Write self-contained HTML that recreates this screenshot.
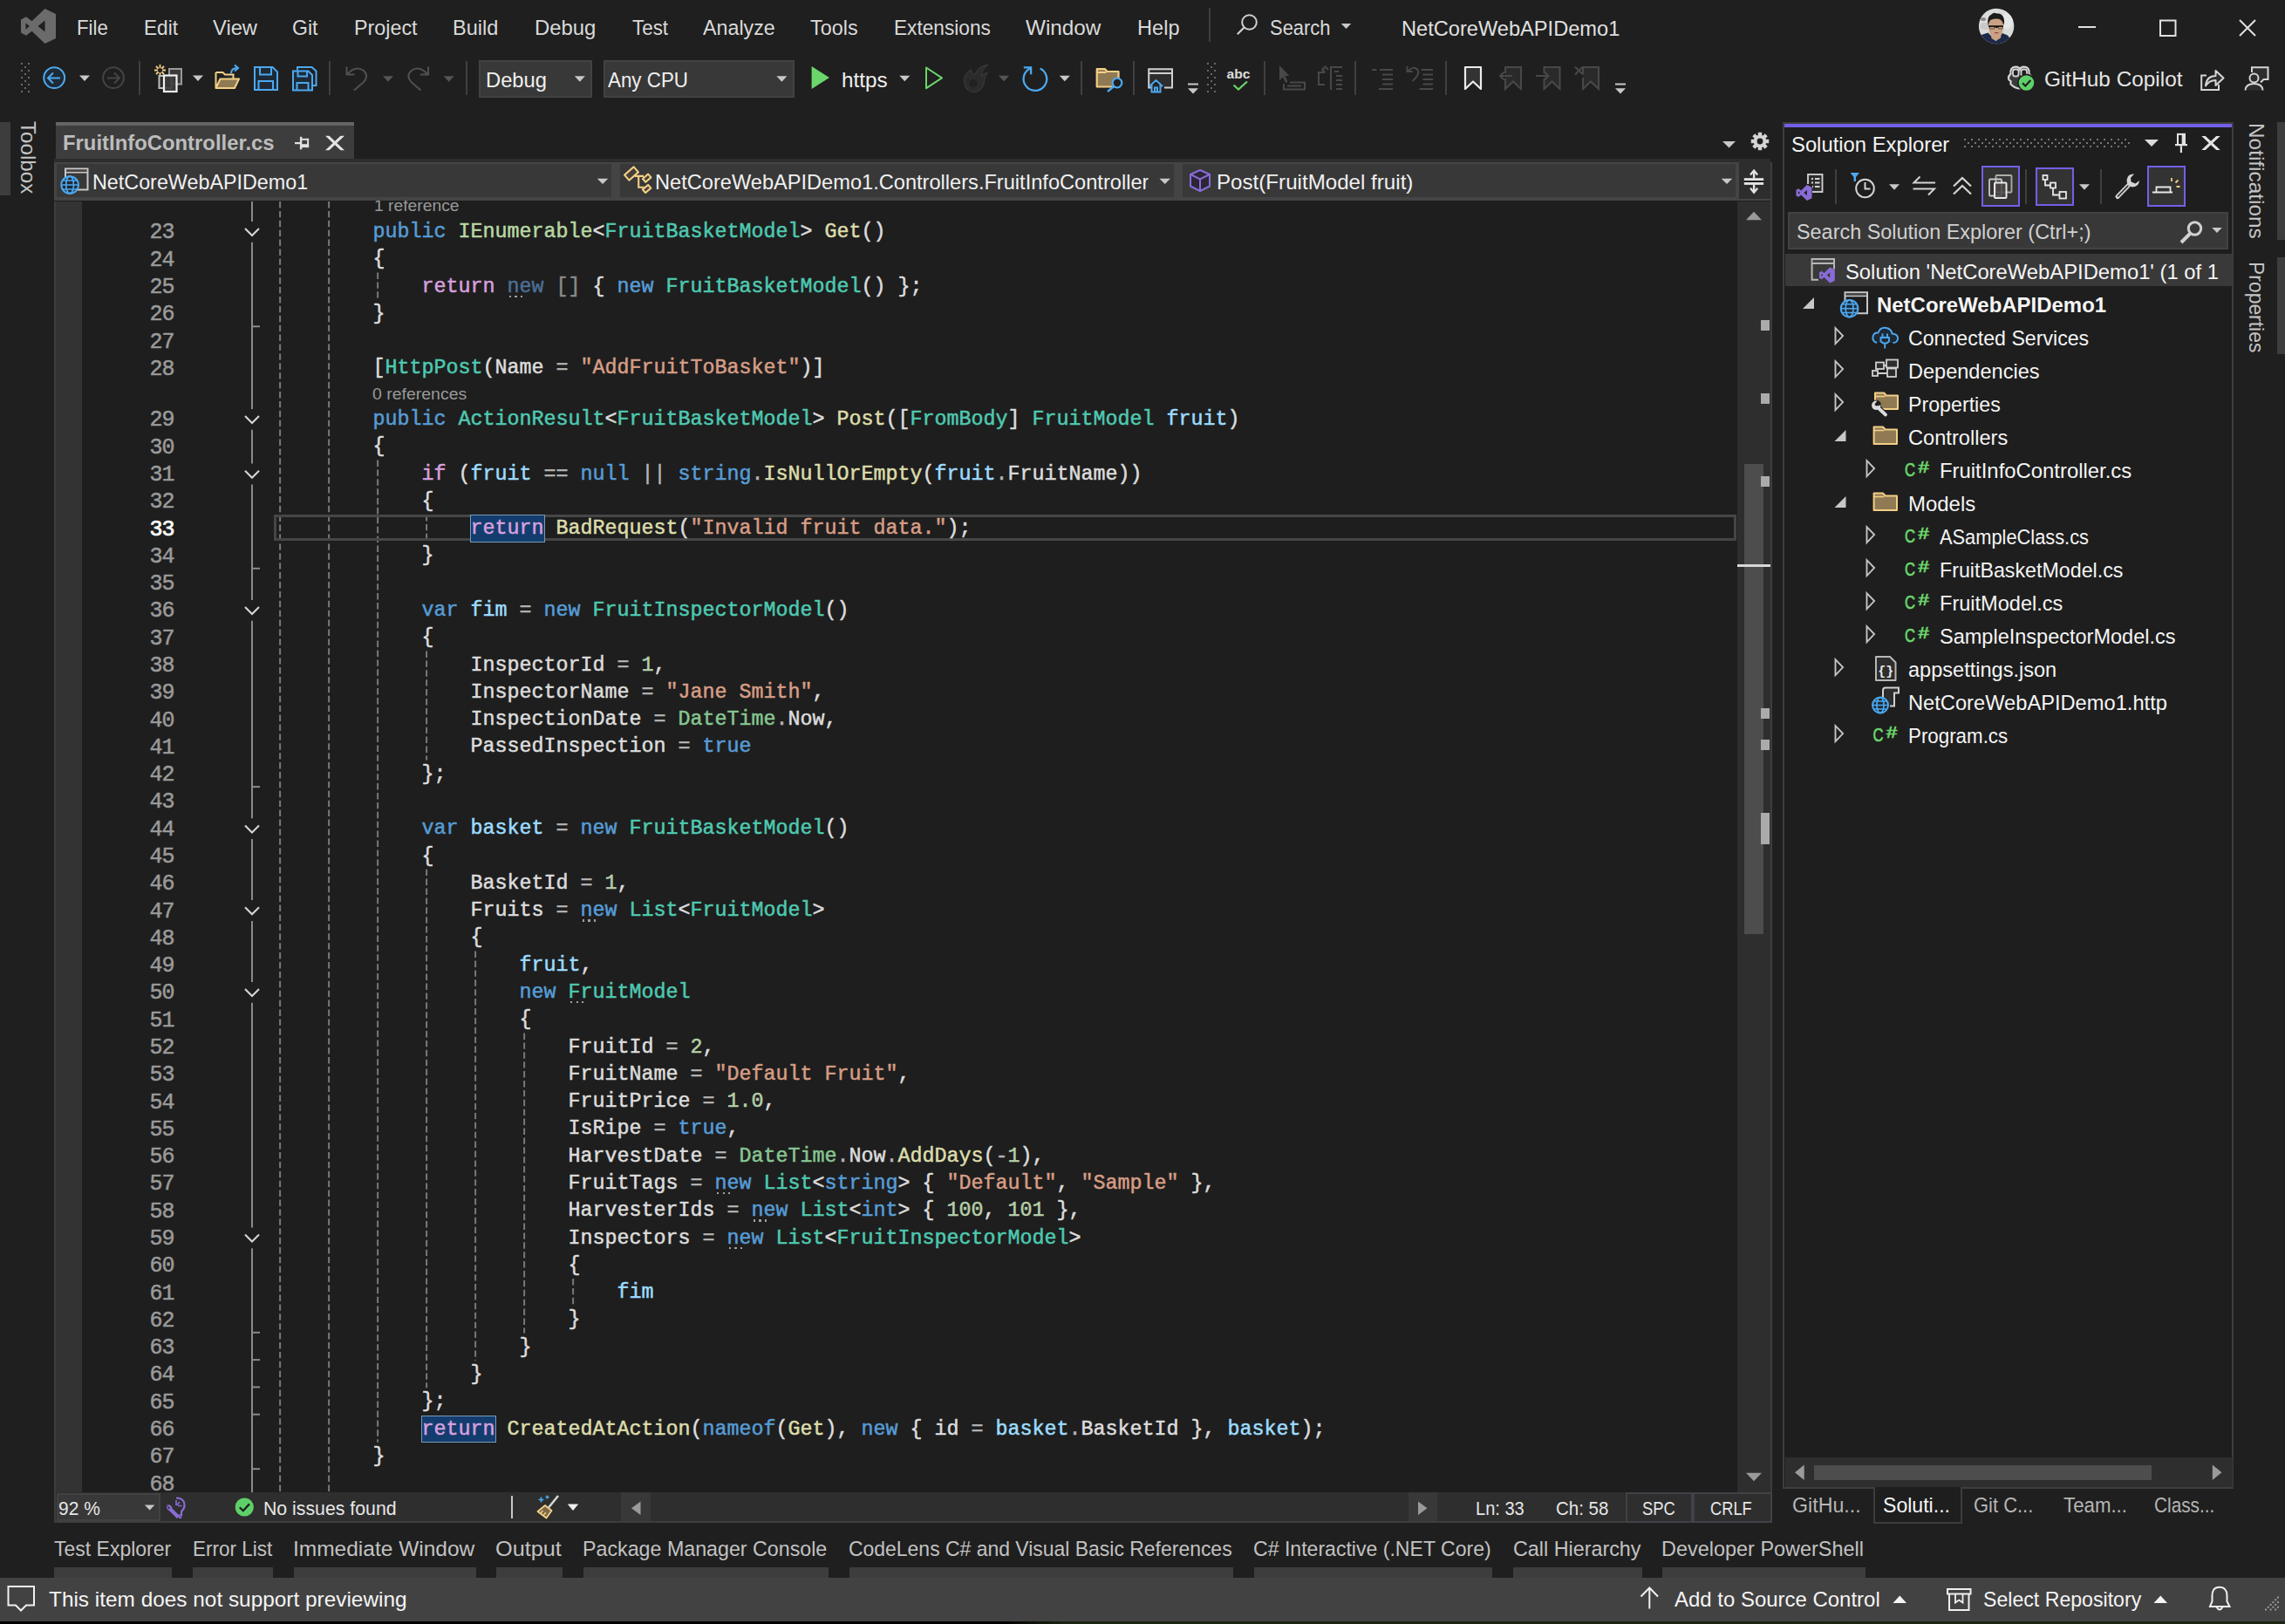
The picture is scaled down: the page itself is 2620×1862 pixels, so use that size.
<!DOCTYPE html><html lang="en"><head><meta charset="utf-8"><title>NetCoreWebAPIDemo1 - Microsoft Visual Studio</title><style>
html,body{margin:0;padding:0;background:#1f1f1f;}
body{width:2620px;height:1862px;position:relative;overflow:hidden;font-family:"Liberation Sans",sans-serif;}
div,svg{position:absolute;}
.grp{position:absolute;left:0;top:0;width:0;height:0;}
.t{white-space:pre;transform-origin:0 50%;}
.s{font-family:"Liberation Sans",sans-serif;}
.cl,.ln{font-family:"Liberation Mono",monospace;font-size:23.33px;line-height:31.285px;height:31.285px;white-space:pre;color:#dcdcdc;-webkit-text-stroke:0.5px currentColor;}
.cl span{-webkit-text-stroke:0.5px currentColor;}
.ln{left:150px;width:49.6px;text-align:right;font-size:25px;letter-spacing:-1px;}
.dt{position:relative;}
.dt::after{content:"";position:absolute;left:2.4px;top:23.2px;width:15.2px;height:2.2px;background:linear-gradient(90deg,#a0a0a0 0,#a0a0a0 2.2px,transparent 2.2px,transparent 6.5px,#a0a0a0 6.5px,#a0a0a0 8.7px,transparent 8.7px,transparent 13px,#a0a0a0 13px,#a0a0a0 15.2px);}
</style></head><body>
<header id="menubar" class="grp">
<div style="left:1386px;top:9px;width:2px;height:39px;background:#3d3d3d;"></div>
<div class="t s" style="left:87.8px;top:17.01px;font-size:24.5px;line-height:29px;color:#dadada;transform:scaleX(0.9092);">File</div>
<div class="t s" style="left:164.7px;top:17.01px;font-size:24.5px;line-height:29px;color:#dadada;transform:scaleX(0.9238);">Edit</div>
<div class="t s" style="left:244px;top:17.01px;font-size:24.5px;line-height:29px;color:#dadada;transform:scaleX(0.9683);">View</div>
<div class="t s" style="left:335.4px;top:17.01px;font-size:24.5px;line-height:29px;color:#dadada;transform:scaleX(0.9389);">Git</div>
<div class="t s" style="left:405.9px;top:17.01px;font-size:24.5px;line-height:29px;color:#dadada;transform:scaleX(0.9519);">Project</div>
<div class="t s" style="left:519px;top:17.01px;font-size:24.5px;line-height:29px;color:#dadada;transform:scaleX(0.9599);">Build</div>
<div class="t s" style="left:613px;top:17.01px;font-size:24.5px;line-height:29px;color:#dadada;transform:scaleX(0.9750);">Debug</div>
<div class="t s" style="left:724.7px;top:17.01px;font-size:24.5px;line-height:29px;color:#dadada;transform:scaleX(0.9146);">Test</div>
<div class="t s" style="left:806.2px;top:17.01px;font-size:24.5px;line-height:29px;color:#dadada;transform:scaleX(0.9498);">Analyze</div>
<div class="t s" style="left:929.4px;top:17.01px;font-size:24.5px;line-height:29px;color:#dadada;transform:scaleX(0.9545);">Tools</div>
<div class="t s" style="left:1024.7px;top:17.01px;font-size:24.5px;line-height:29px;color:#dadada;transform:scaleX(0.9253);">Extensions</div>
<div class="t s" style="left:1176.3px;top:17.01px;font-size:24.5px;line-height:29px;color:#dadada;transform:scaleX(0.9915);">Window</div>
<div class="t s" style="left:1304px;top:17.01px;font-size:24.5px;line-height:29px;color:#dadada;transform:scaleX(0.9625);">Help</div>
<div class="t s" style="left:1455.7px;top:16.51px;font-size:24.5px;line-height:29px;color:#dadada;transform:scaleX(0.8951);">Search</div>
<div class="t s" style="left:1607.3px;top:17.71px;font-size:24.5px;line-height:29px;color:#e0e0e0;transform:scaleX(0.9640);">NetCoreWebAPIDemo1</div>
</header>
<nav id="toolbar" class="grp">
<div style="left:159px;top:70px;width:2px;height:39px;background:#404040;"></div>
<div style="left:377px;top:70px;width:2px;height:39px;background:#404040;"></div>
<div style="left:533.5px;top:70px;width:2px;height:39px;background:#404040;"></div>
<div style="left:1238.5px;top:70px;width:2px;height:39px;background:#404040;"></div>
<div style="left:1298.5px;top:70px;width:2px;height:39px;background:#404040;"></div>
<div style="left:1449px;top:70px;width:2px;height:39px;background:#404040;"></div>
<div style="left:1553px;top:70px;width:2px;height:39px;background:#404040;"></div>
<div style="left:1657px;top:70px;width:2px;height:39px;background:#404040;"></div>
<div style="left:549px;top:68.5px;width:130px;height:43px;background:#383838;border:2px solid #424242;box-sizing:border-box;"></div>
<div style="left:692px;top:68.5px;width:219px;height:43px;background:#383838;border:2px solid #424242;box-sizing:border-box;"></div>
<div class="t s" style="left:557px;top:76.61px;font-size:24.5px;line-height:29px;color:#f0f0f0;transform:scaleX(0.9695);">Debug</div>
<div class="t s" style="left:697.4px;top:76.61px;font-size:24.5px;line-height:29px;color:#f0f0f0;transform:scaleX(0.9130);">Any CPU</div>
<div class="t s" style="left:965px;top:76.61px;font-size:24.5px;line-height:29px;color:#f0f0f0;transform:scaleX(0.9901);">https</div>
<div class="t s" style="left:2343.5px;top:76.41px;font-size:24.5px;line-height:29px;color:#e6e6e6;transform:scaleX(0.9948);">GitHub Copilot</div>
</nav>
<main id="editor" class="grp">
<div style="left:0px;top:140px;width:12px;height:84px;background:#3d3d3d;"></div>
<div style="left:64px;top:140px;width:342px;height:42px;background:#3d3d3d;"></div>
<div style="left:64px;top:140px;width:342px;height:3.9px;background:#656366;"></div>
<div style="left:62px;top:182px;width:1968px;height:4.2px;background:#2d2d2d;"></div>
<div style="left:62px;top:186px;width:1970px;height:44.3px;background:#444444;"></div>
<div style="left:1994px;top:186px;width:36px;height:42px;background:#2d2d2d;"></div>
<div style="left:65px;top:188px;width:636px;height:38px;background:#383838;"></div>
<div style="left:711px;top:188px;width:635px;height:38px;background:#383838;"></div>
<div style="left:1356px;top:188px;width:634px;height:38px;background:#383838;"></div>
<div style="left:62px;top:231px;width:2px;height:1515px;background:#3d3d3d;"></div>
<div style="left:2030px;top:186px;width:2px;height:1560px;background:#3d3d3d;"></div>
<div style="left:64px;top:231px;width:1928px;height:1480px;background:#1e1e1e;"></div>
<div style="left:64px;top:231px;width:30px;height:1480px;background:#333333;"></div>
<div style="left:1992px;top:231px;width:38px;height:1480px;background:#2e2e2e;"></div>
<div style="left:2000px;top:532px;width:22px;height:539px;background:#4d4d4d;"></div>
<div style="left:2019px;top:366.5px;width:10px;height:12px;background:#ababab;"></div>
<div style="left:2019px;top:451px;width:10px;height:12px;background:#ababab;"></div>
<div style="left:2019px;top:546px;width:10px;height:12px;background:#ababab;"></div>
<div style="left:2019px;top:811.5px;width:10px;height:12px;background:#ababab;"></div>
<div style="left:2019px;top:848px;width:10px;height:12px;background:#ababab;"></div>
<div style="left:2019px;top:932px;width:10px;height:36px;background:#ababab;"></div>
<div style="left:1992px;top:646.5px;width:38px;height:3.5px;background:#d8d8d8;"></div>
<div style="left:64px;top:1711px;width:1966px;height:35px;background:#2e2e2e;"></div>
<div style="left:62px;top:1744px;width:1970px;height:2px;background:#3d3d3d;"></div>
<div style="left:65px;top:1712px;width:119px;height:32px;background:#383838;border:2px solid #424242;box-sizing:border-box;"></div>
<div style="left:586px;top:1715px;width:2px;height:26px;background:#c8c8c8;"></div>
<div style="left:712px;top:1711px;width:34px;height:33px;background:#383838;"></div>
<div style="left:1614.5px;top:1711px;width:33px;height:33px;background:#383838;"></div>
<div style="left:1864.3px;top:1711.3px;width:77px;height:35.2px;background:#2e2e2e;border:2px solid #404248;box-sizing:border-box;"></div>
<div style="left:1940.8px;top:1711.3px;width:90.9px;height:35.2px;background:#2e2e2e;border:2px solid #404248;box-sizing:border-box;"></div>
<svg style="left:0;top:0" width="2000" height="1711"><g stroke="#787878" stroke-width="2" stroke-dasharray="7.4 3.5"><line x1="321.1" x2="321.1" y1="231.0" y2="1711.0"/><line x1="377.1" x2="377.1" y1="231.0" y2="1711.0"/><line x1="433.1" x2="433.1" y1="312.5" y2="343.8"/><line x1="433.1" x2="433.1" y1="527.5" y2="1653.7"/><line x1="489.1" x2="489.1" y1="590.0" y2="621.3"/><line x1="489.1" x2="489.1" y1="746.5" y2="871.6"/><line x1="489.1" x2="489.1" y1="996.7" y2="1591.2"/><line x1="545.1" x2="545.1" y1="1090.6" y2="1559.9"/><line x1="601.1" x2="601.1" y1="1184.5" y2="1528.6"/><line x1="657.1" x2="657.1" y1="1466.0" y2="1497.3"/></g></svg>
<div style="left:313.5px;top:590.3px;width:1677.5px;height:29.5px;border:3.5px solid #464646;box-sizing:border-box;"></div>
<div style="left:539.4px;top:590.1px;width:85.4px;height:31.7px;background:#133d6e;border:1px solid #7a9ab6;box-sizing:border-box;"></div>
<div style="left:483.4px;top:1622.55px;width:85.4px;height:31.7px;background:#133d6e;border:1px solid #7a9ab6;box-sizing:border-box;"></div>
<svg style="left:0;top:0" width="400" height="1711"><line x1="289.0" x2="289.0" y1="231.0" y2="254.0" stroke="#8a8a8a" stroke-width="2"/><line x1="289.0" x2="289.0" y1="277.8" y2="469.0" stroke="#8a8a8a" stroke-width="2"/><line x1="289.0" x2="289.0" y1="492.8" y2="531.6" stroke="#8a8a8a" stroke-width="2"/><line x1="289.0" x2="289.0" y1="555.4" y2="688.0" stroke="#8a8a8a" stroke-width="2"/><line x1="289.0" x2="289.0" y1="711.8" y2="938.3" stroke="#8a8a8a" stroke-width="2"/><line x1="289.0" x2="289.0" y1="962.1" y2="1032.1" stroke="#8a8a8a" stroke-width="2"/><line x1="289.0" x2="289.0" y1="1055.9" y2="1126.0" stroke="#8a8a8a" stroke-width="2"/><line x1="289.0" x2="289.0" y1="1149.8" y2="1407.5" stroke="#8a8a8a" stroke-width="2"/><line x1="289.0" x2="289.0" y1="1431.3" y2="1711.0" stroke="#8a8a8a" stroke-width="2"/><line x1="289.0" x2="298.0" y1="374.3" y2="374.3" stroke="#8a8a8a" stroke-width="2"/><line x1="289.0" x2="298.0" y1="651.8" y2="651.8" stroke="#8a8a8a" stroke-width="2"/><line x1="289.0" x2="298.0" y1="902.1" y2="902.1" stroke="#8a8a8a" stroke-width="2"/><line x1="289.0" x2="298.0" y1="1527.8" y2="1527.8" stroke="#8a8a8a" stroke-width="2"/><line x1="289.0" x2="298.0" y1="1559.1" y2="1559.1" stroke="#8a8a8a" stroke-width="2"/><line x1="289.0" x2="298.0" y1="1590.4" y2="1590.4" stroke="#8a8a8a" stroke-width="2"/><line x1="289.0" x2="298.0" y1="1621.7" y2="1621.7" stroke="#8a8a8a" stroke-width="2"/><line x1="289.0" x2="298.0" y1="1684.2" y2="1684.2" stroke="#8a8a8a" stroke-width="2"/><polyline points="281.0,262.1 289.0,270.1 297.0,262.1" fill="none" stroke="#d6d6d6" stroke-width="2.1"/><polyline points="281.0,477.1 289.0,485.1 297.0,477.1" fill="none" stroke="#d6d6d6" stroke-width="2.1"/><polyline points="281.0,539.7 289.0,547.7 297.0,539.7" fill="none" stroke="#d6d6d6" stroke-width="2.1"/><polyline points="281.0,696.1 289.0,704.1 297.0,696.1" fill="none" stroke="#d6d6d6" stroke-width="2.1"/><polyline points="281.0,946.4 289.0,954.4 297.0,946.4" fill="none" stroke="#d6d6d6" stroke-width="2.1"/><polyline points="281.0,1040.2 289.0,1048.2 297.0,1040.2" fill="none" stroke="#d6d6d6" stroke-width="2.1"/><polyline points="281.0,1134.1 289.0,1142.1 297.0,1134.1" fill="none" stroke="#d6d6d6" stroke-width="2.1"/><polyline points="281.0,1415.6 289.0,1423.6 297.0,1415.6" fill="none" stroke="#d6d6d6" stroke-width="2.1"/></svg>
<div class="ln" style="top:251.39px;color:#9a9a9a;">23</div>
<div class="cl" style="left:427.5px;top:251.04px"><span style="color:#569cd6">public</span> <span style="color:#b8d7a3">IEnumerable</span>&lt;<span style="color:#4ec9b0">FruitBasketModel</span>&gt; <span style="color:#dcdcaa">Get</span>()</div>
<div class="ln" style="top:282.68px;color:#9a9a9a;">24</div>
<div class="cl" style="left:427.5px;top:282.33px">{</div>
<div class="ln" style="top:313.96px;color:#9a9a9a;">25</div>
<div class="cl" style="left:483.5px;top:313.61px"><span style="color:#d8a0df">return</span> <span style="color:#4b6f94" class="dt">new</span> <span style="color:#8a8a8a">[]</span> { <span style="color:#569cd6">new</span> <span style="color:#4ec9b0">FruitBasketModel</span>() };</div>
<div class="ln" style="top:345.25px;color:#9a9a9a;">26</div>
<div class="cl" style="left:427.5px;top:344.90px">}</div>
<div class="ln" style="top:376.53px;color:#9a9a9a;">27</div>
<div class="ln" style="top:407.82px;color:#9a9a9a;">28</div>
<div class="cl" style="left:427.5px;top:407.47px">[<span style="color:#4ec9b0">HttpPost</span>(Name <span style="color:#b4b4b4">=</span> <span style="color:#d69d85">"AddFruitToBasket"</span>)]</div>
<div class="ln" style="top:466.39px;color:#9a9a9a;">29</div>
<div class="cl" style="left:427.5px;top:466.04px"><span style="color:#569cd6">public</span> <span style="color:#4ec9b0">ActionResult</span>&lt;<span style="color:#4ec9b0">FruitBasketModel</span>&gt; <span style="color:#dcdcaa">Post</span>([<span style="color:#4ec9b0">FromBody</span>] <span style="color:#4ec9b0">FruitModel</span> <span style="color:#9cdcfe">fruit</span>)</div>
<div class="ln" style="top:497.68px;color:#9a9a9a;">30</div>
<div class="cl" style="left:427.5px;top:497.33px">{</div>
<div class="ln" style="top:528.97px;color:#9a9a9a;">31</div>
<div class="cl" style="left:483.5px;top:528.61px"><span style="color:#d8a0df">if</span> (<span style="color:#9cdcfe">fruit</span> <span style="color:#b4b4b4">==</span> <span style="color:#569cd6">null</span> <span style="color:#b4b4b4">||</span> <span style="color:#569cd6">string</span><span style="color:#b4b4b4">.</span><span style="color:#dcdcaa">IsNullOrEmpty</span>(<span style="color:#9cdcfe">fruit</span><span style="color:#b4b4b4">.</span>FruitName))</div>
<div class="ln" style="top:560.25px;color:#9a9a9a;">32</div>
<div class="cl" style="left:483.5px;top:559.90px">{</div>
<div class="ln" style="top:591.54px;color:#ffffff;-webkit-text-stroke:0.7px #fff;">33</div>
<div class="cl" style="left:539.5px;top:591.18px"><span style="color:#d8a0df">return</span> <span style="color:#dcdcaa">BadRequest</span>(<span style="color:#d69d85">"Invalid fruit data."</span>);</div>
<div class="ln" style="top:622.82px;color:#9a9a9a;">34</div>
<div class="cl" style="left:483.5px;top:622.47px">}</div>
<div class="ln" style="top:654.11px;color:#9a9a9a;">35</div>
<div class="ln" style="top:685.39px;color:#9a9a9a;">36</div>
<div class="cl" style="left:483.5px;top:685.04px"><span style="color:#569cd6">var</span> <span style="color:#9cdcfe">fim</span> <span style="color:#b4b4b4">=</span> <span style="color:#569cd6">new</span> <span style="color:#4ec9b0">FruitInspectorModel</span>()</div>
<div class="ln" style="top:716.68px;color:#9a9a9a;">37</div>
<div class="cl" style="left:483.5px;top:716.32px">{</div>
<div class="ln" style="top:747.96px;color:#9a9a9a;">38</div>
<div class="cl" style="left:539.5px;top:747.61px">InspectorId <span style="color:#b4b4b4">=</span> <span style="color:#b5cea8">1</span>,</div>
<div class="ln" style="top:779.25px;color:#9a9a9a;">39</div>
<div class="cl" style="left:539.5px;top:778.89px">InspectorName <span style="color:#b4b4b4">=</span> <span style="color:#d69d85">"Jane Smith"</span>,</div>
<div class="ln" style="top:810.53px;color:#9a9a9a;">40</div>
<div class="cl" style="left:539.5px;top:810.18px">InspectionDate <span style="color:#b4b4b4">=</span> <span style="color:#86c691">DateTime</span><span style="color:#b4b4b4">.</span>Now,</div>
<div class="ln" style="top:841.82px;color:#9a9a9a;">41</div>
<div class="cl" style="left:539.5px;top:841.46px">PassedInspection <span style="color:#b4b4b4">=</span> <span style="color:#569cd6">true</span></div>
<div class="ln" style="top:873.10px;color:#9a9a9a;">42</div>
<div class="cl" style="left:483.5px;top:872.75px">};</div>
<div class="ln" style="top:904.39px;color:#9a9a9a;">43</div>
<div class="ln" style="top:935.67px;color:#9a9a9a;">44</div>
<div class="cl" style="left:483.5px;top:935.32px"><span style="color:#569cd6">var</span> <span style="color:#9cdcfe">basket</span> <span style="color:#b4b4b4">=</span> <span style="color:#569cd6">new</span> <span style="color:#4ec9b0">FruitBasketModel</span>()</div>
<div class="ln" style="top:966.96px;color:#9a9a9a;">45</div>
<div class="cl" style="left:483.5px;top:966.60px">{</div>
<div class="ln" style="top:998.24px;color:#9a9a9a;">46</div>
<div class="cl" style="left:539.5px;top:997.89px">BasketId <span style="color:#b4b4b4">=</span> <span style="color:#b5cea8">1</span>,</div>
<div class="ln" style="top:1029.52px;color:#9a9a9a;">47</div>
<div class="cl" style="left:539.5px;top:1029.17px">Fruits <span style="color:#b4b4b4">=</span> <span style="color:#569cd6" class="dt">new</span> <span style="color:#4ec9b0">List</span>&lt;<span style="color:#4ec9b0">FruitModel</span>&gt;</div>
<div class="ln" style="top:1060.81px;color:#9a9a9a;">48</div>
<div class="cl" style="left:539.5px;top:1060.46px">{</div>
<div class="ln" style="top:1092.10px;color:#9a9a9a;">49</div>
<div class="cl" style="left:595.5px;top:1091.74px"><span style="color:#9cdcfe">fruit</span>,</div>
<div class="ln" style="top:1123.38px;color:#9a9a9a;">50</div>
<div class="cl" style="left:595.5px;top:1123.03px"><span style="color:#569cd6">new</span> <span style="color:#4ec9b0" class="dt">FruitModel</span></div>
<div class="ln" style="top:1154.66px;color:#9a9a9a;">51</div>
<div class="cl" style="left:595.5px;top:1154.31px">{</div>
<div class="ln" style="top:1185.95px;color:#9a9a9a;">52</div>
<div class="cl" style="left:651.5px;top:1185.60px">FruitId <span style="color:#b4b4b4">=</span> <span style="color:#b5cea8">2</span>,</div>
<div class="ln" style="top:1217.23px;color:#9a9a9a;">53</div>
<div class="cl" style="left:651.5px;top:1216.88px">FruitName <span style="color:#b4b4b4">=</span> <span style="color:#d69d85">"Default Fruit"</span>,</div>
<div class="ln" style="top:1248.52px;color:#9a9a9a;">54</div>
<div class="cl" style="left:651.5px;top:1248.17px">FruitPrice <span style="color:#b4b4b4">=</span> <span style="color:#b5cea8">1.0</span>,</div>
<div class="ln" style="top:1279.80px;color:#9a9a9a;">55</div>
<div class="cl" style="left:651.5px;top:1279.45px">IsRipe <span style="color:#b4b4b4">=</span> <span style="color:#569cd6">true</span>,</div>
<div class="ln" style="top:1311.09px;color:#9a9a9a;">56</div>
<div class="cl" style="left:651.5px;top:1310.74px">HarvestDate <span style="color:#b4b4b4">=</span> <span style="color:#86c691">DateTime</span><span style="color:#b4b4b4">.</span>Now<span style="color:#b4b4b4">.</span><span style="color:#dcdcaa">AddDays</span>(<span style="color:#b4b4b4">-</span><span style="color:#b5cea8">1</span>),</div>
<div class="ln" style="top:1342.38px;color:#9a9a9a;">57</div>
<div class="cl" style="left:651.5px;top:1342.02px">FruitTags <span style="color:#b4b4b4">=</span> <span style="color:#569cd6" class="dt">new</span> <span style="color:#4ec9b0">List</span>&lt;<span style="color:#569cd6">string</span>&gt; { <span style="color:#d69d85">"Default"</span>, <span style="color:#d69d85">"Sample"</span> },</div>
<div class="ln" style="top:1373.66px;color:#9a9a9a;">58</div>
<div class="cl" style="left:651.5px;top:1373.31px">HarvesterIds <span style="color:#b4b4b4">=</span> <span style="color:#569cd6" class="dt">new</span> <span style="color:#4ec9b0">List</span>&lt;<span style="color:#569cd6">int</span>&gt; { <span style="color:#b5cea8">100</span>, <span style="color:#b5cea8">101</span> },</div>
<div class="ln" style="top:1404.94px;color:#9a9a9a;">59</div>
<div class="cl" style="left:651.5px;top:1404.59px">Inspectors <span style="color:#b4b4b4">=</span> <span style="color:#569cd6" class="dt">new</span> <span style="color:#4ec9b0">List</span>&lt;<span style="color:#4ec9b0">FruitInspectorModel</span>&gt;</div>
<div class="ln" style="top:1436.23px;color:#9a9a9a;">60</div>
<div class="cl" style="left:651.5px;top:1435.88px">{</div>
<div class="ln" style="top:1467.51px;color:#9a9a9a;">61</div>
<div class="cl" style="left:707.5px;top:1467.16px"><span style="color:#9cdcfe">fim</span></div>
<div class="ln" style="top:1498.80px;color:#9a9a9a;">62</div>
<div class="cl" style="left:651.5px;top:1498.45px">}</div>
<div class="ln" style="top:1530.09px;color:#9a9a9a;">63</div>
<div class="cl" style="left:595.5px;top:1529.73px">}</div>
<div class="ln" style="top:1561.37px;color:#9a9a9a;">64</div>
<div class="cl" style="left:539.5px;top:1561.02px">}</div>
<div class="ln" style="top:1592.65px;color:#9a9a9a;">65</div>
<div class="cl" style="left:483.5px;top:1592.30px">};</div>
<div class="ln" style="top:1623.94px;color:#9a9a9a;">66</div>
<div class="cl" style="left:483.5px;top:1623.59px"><span style="color:#d8a0df">return</span> <span style="color:#dcdcaa">CreatedAtAction</span>(<span style="color:#569cd6">nameof</span>(<span style="color:#dcdcaa">Get</span>), <span style="color:#569cd6">new</span> { id <span style="color:#b4b4b4">=</span> <span style="color:#9cdcfe">basket</span><span style="color:#b4b4b4">.</span>BasketId }, <span style="color:#9cdcfe">basket</span>);</div>
<div class="ln" style="top:1655.22px;color:#9a9a9a;">67</div>
<div class="cl" style="left:427.5px;top:1654.87px">}</div>
<div class="ln" style="top:1686.51px;color:#9a9a9a;">68</div>
<div class="t s" style="left:72px;top:148.61px;font-size:24.5px;line-height:29px;color:#bcbcbc;font-weight:700;transform:scaleX(0.9739);">FruitInfoController.cs</div>
<div class="t s" style="left:105.6px;top:193.61px;font-size:24.5px;line-height:29px;color:#f0f0f0;transform:scaleX(0.9521);">NetCoreWebAPIDemo1</div>
<div class="t s" style="left:751px;top:193.61px;font-size:24.5px;line-height:29px;color:#f0f0f0;transform:scaleX(0.9636);width:586.9px;overflow:hidden;">NetCoreWebAPIDemo1.Controllers.FruitInfoController</div>
<div class="t s" style="left:1395px;top:193.61px;font-size:24.5px;line-height:29px;color:#f0f0f0;transform:scaleX(0.9855);">Post(FruitModel fruit)</div>
<div class="t s" style="left:67px;top:1715.90px;font-size:22.5px;line-height:27px;color:#e6e6e6;transform:scaleX(0.9318);">92 %</div>
<div class="t s" style="left:301.7px;top:1715.90px;font-size:22.5px;line-height:27px;color:#e6e6e6;transform:scaleX(0.9457);">No issues found</div>
<div class="t s" style="left:1691.6px;top:1715.90px;font-size:22.5px;line-height:27px;color:#e6e6e6;transform:scaleX(0.8903);">Ln: 33</div>
<div class="t s" style="left:1784.4px;top:1715.90px;font-size:22.5px;line-height:27px;color:#e6e6e6;transform:scaleX(0.9111);">Ch: 58</div>
<div class="t s" style="left:1883px;top:1715.90px;font-size:22.5px;line-height:27px;color:#e6e6e6;transform:scaleX(0.8170);">SPC</div>
<div class="t s" style="left:1961px;top:1715.90px;font-size:22.5px;line-height:27px;color:#e6e6e6;transform:scaleX(0.8117);">CRLF</div>
<div class="t s" style="left:426.7px;top:439.65px;font-size:19.2px;line-height:23px;color:#999999;transform:scaleX(1.0145);">0 references</div>
<div class="t s" style="left:429.2px;top:224.05px;font-size:19.2px;line-height:23px;color:#999999;transform:scaleX(1.0055);">1 reference</div>
<div class="t s" style="left:17px;top:139.3px;writing-mode:vertical-rl;font-size:24.5px;line-height:30px;color:#c4c4c4;transform-origin:0 0;transform:scaleY(0.9863)">Toolbox</div>
<div style="left:62px;top:226px;width:1932px;height:4.3px;background:#444444;"></div>
</main>
<aside id="solution-explorer" class="grp">
<div style="left:2044px;top:140px;width:517px;height:1567px;background:#1e1e1e;border:2px solid #3d3d3d;box-sizing:border-box;"></div>
<div style="left:2046px;top:142px;width:513px;height:4.1px;background:#7160e8;"></div>
<svg style="left:2252px;top:159px" width="190" height="10"><defs><pattern id="gd" width="8" height="8" patternUnits="userSpaceOnUse"><rect x="0" y="0" width="2" height="2" fill="#767676"/><rect x="4" y="4" width="2" height="2" fill="#767676"/></pattern></defs><rect width="190" height="10" fill="url(#gd)"/></svg>
<div style="left:2272px;top:190.3px;width:44px;height:47.2px;background:#333333;border:2px solid #7160e8;box-sizing:border-box;"></div>
<div style="left:2334px;top:192px;width:44px;height:44px;background:#333333;border:2px solid #7160e8;box-sizing:border-box;"></div>
<div style="left:2462px;top:190.3px;width:44px;height:47.2px;background:#333333;border:2px solid #7160e8;box-sizing:border-box;"></div>
<div style="left:2104px;top:194px;width:2px;height:40px;background:#404040;"></div>
<div style="left:2322px;top:194px;width:2px;height:40px;background:#404040;"></div>
<div style="left:2408px;top:194px;width:2px;height:40px;background:#404040;"></div>
<div style="left:2050px;top:243px;width:505px;height:43px;background:#383838;border:2px solid #424242;box-sizing:border-box;"></div>
<div style="left:2047px;top:290.5px;width:513px;height:37.5px;background:#393939;"></div>
<div style="left:2047px;top:1671px;width:513px;height:34px;background:#2e2e2e;"></div>
<div style="left:2080px;top:1679.5px;width:386.5px;height:17px;background:#4d4d4d;"></div>
<div style="left:2147.5px;top:1705px;width:102px;height:42px;background:#1e1e1e;border:2px solid #3d3d3d;border-top:none;box-sizing:border-box;"></div>
<div class="t s" style="left:2053.5px;top:150.51px;font-size:24.5px;line-height:29px;color:#f5f5f5;transform:scaleX(0.9717);">Solution Explorer</div>
<div class="t s" style="left:2059.5px;top:250.61px;font-size:24.5px;line-height:29px;color:#d0d0d0;transform:scaleX(0.9551);">Search Solution Explorer (Ctrl+;)</div>
<div class="t s" style="left:2115.5px;top:296.81px;font-size:24.5px;line-height:29px;color:#f5f5f5;transform:scaleX(0.9714);width:445.2px;overflow:hidden;">Solution 'NetCoreWebAPIDemo1' (1 of 1 project)</div>
<div class="t s" style="left:2152.4px;top:334.81px;font-size:24.5px;line-height:29px;color:#f5f5f5;font-weight:700;transform:scaleX(0.9777);">NetCoreWebAPIDemo1</div>
<div class="t s" style="left:2187.8px;top:372.81px;font-size:24.5px;line-height:29px;color:#f5f5f5;transform:scaleX(0.9450);">Connected Services</div>
<div class="t s" style="left:2187.8px;top:410.81px;font-size:24.5px;line-height:29px;color:#f5f5f5;transform:scaleX(0.9607);">Dependencies</div>
<div class="t s" style="left:2187.8px;top:448.81px;font-size:24.5px;line-height:29px;color:#f5f5f5;transform:scaleX(0.9474);">Properties</div>
<div class="t s" style="left:2187.8px;top:486.81px;font-size:24.5px;line-height:29px;color:#f5f5f5;transform:scaleX(0.9640);">Controllers</div>
<div class="t s" style="left:2224px;top:524.81px;font-size:24.5px;line-height:29px;color:#f5f5f5;transform:scaleX(0.9742);">FruitInfoController.cs</div>
<div class="t s" style="left:2187.8px;top:562.81px;font-size:24.5px;line-height:29px;color:#f5f5f5;transform:scaleX(0.9774);">Models</div>
<div class="t s" style="left:2224px;top:600.81px;font-size:24.5px;line-height:29px;color:#f5f5f5;transform:scaleX(0.8907);">ASampleClass.cs</div>
<div class="t s" style="left:2224px;top:638.81px;font-size:24.5px;line-height:29px;color:#f5f5f5;transform:scaleX(0.9480);">FruitBasketModel.cs</div>
<div class="t s" style="left:2224px;top:676.81px;font-size:24.5px;line-height:29px;color:#f5f5f5;transform:scaleX(0.9616);">FruitModel.cs</div>
<div class="t s" style="left:2224px;top:714.81px;font-size:24.5px;line-height:29px;color:#f5f5f5;transform:scaleX(0.9596);">SampleInspectorModel.cs</div>
<div class="t s" style="left:2187.8px;top:752.81px;font-size:24.5px;line-height:29px;color:#f5f5f5;transform:scaleX(0.9612);">appsettings.json</div>
<div class="t s" style="left:2187.8px;top:790.81px;font-size:24.5px;line-height:29px;color:#f5f5f5;transform:scaleX(0.9661);">NetCoreWebAPIDemo1.http</div>
<div class="t s" style="left:2187.8px;top:828.81px;font-size:24.5px;line-height:29px;color:#f5f5f5;transform:scaleX(0.9117);">Program.cs</div>
<div class="t s" style="left:2055px;top:1710.61px;font-size:24.5px;line-height:29px;color:#b6b6b6;transform:scaleX(0.9465);">GitHu...</div>
<div class="t s" style="left:2159px;top:1710.61px;font-size:24.5px;line-height:29px;color:#f5f5f5;transform:scaleX(0.9423);">Soluti...</div>
<div class="t s" style="left:2262.7px;top:1710.61px;font-size:24.5px;line-height:29px;color:#b6b6b6;transform:scaleX(0.8959);">Git C...</div>
<div class="t s" style="left:2366px;top:1710.61px;font-size:24.5px;line-height:29px;color:#b6b6b6;transform:scaleX(0.9086);">Team...</div>
<div class="t s" style="left:2469.7px;top:1710.61px;font-size:24.5px;line-height:29px;color:#b6b6b6;transform:scaleX(0.8484);">Class...</div>
</aside>
<aside id="side-tabs" class="grp">
<div style="left:2611px;top:140px;width:9px;height:135px;background:#3d3d3d;"></div>
<div style="left:2611px;top:295px;width:9px;height:111px;background:#3d3d3d;"></div>
<div class="t s" style="left:2571.6px;top:140.5px;writing-mode:vertical-rl;font-size:24.5px;line-height:30px;color:#c4c4c4;transform-origin:0 0;transform:scaleY(0.9944)">Notifications</div>
<div class="t s" style="left:2571.6px;top:300px;writing-mode:vertical-rl;font-size:24.5px;line-height:30px;color:#c4c4c4;transform-origin:0 0;transform:scaleY(0.9349)">Properties</div>
</aside>
<nav id="tool-window-tabs" class="grp">
<div style="left:62.3px;top:1797px;width:135.2px;height:12px;background:#3d3d3d;"></div>
<div style="left:221.3px;top:1797px;width:92.2px;height:12px;background:#3d3d3d;"></div>
<div style="left:336.5px;top:1797px;width:209.3px;height:12px;background:#3d3d3d;"></div>
<div style="left:568.7px;top:1797px;width:76.8px;height:12px;background:#3d3d3d;"></div>
<div style="left:668.9px;top:1797px;width:281.3px;height:12px;background:#3d3d3d;"></div>
<div style="left:973.7px;top:1797px;width:440.6px;height:12px;background:#3d3d3d;"></div>
<div style="left:1437.8px;top:1797px;width:273.7px;height:12px;background:#3d3d3d;"></div>
<div style="left:1735px;top:1797px;width:147.5px;height:12px;background:#3d3d3d;"></div>
<div style="left:1905.9px;top:1797px;width:233px;height:12px;background:#3d3d3d;"></div>
<div class="t s" style="left:61.8px;top:1761.01px;font-size:24.5px;line-height:29px;color:#c2c2c2;transform:scaleX(0.9387);">Test Explorer</div>
<div class="t s" style="left:220.8px;top:1761.01px;font-size:24.5px;line-height:29px;color:#c2c2c2;transform:scaleX(0.9176);">Error List</div>
<div class="t s" style="left:336px;top:1761.01px;font-size:24.5px;line-height:29px;color:#c2c2c2;transform:scaleX(0.9999);">Immediate Window</div>
<div class="t s" style="left:568.2px;top:1761.01px;font-size:24.5px;line-height:29px;color:#c2c2c2;transform:scaleX(1.0304);">Output</div>
<div class="t s" style="left:668.4px;top:1761.01px;font-size:24.5px;line-height:29px;color:#c2c2c2;transform:scaleX(0.9484);">Package Manager Console</div>
<div class="t s" style="left:973.2px;top:1761.01px;font-size:24.5px;line-height:29px;color:#c2c2c2;transform:scaleX(0.9365);">CodeLens C# and Visual Basic References</div>
<div class="t s" style="left:1437.3px;top:1761.01px;font-size:24.5px;line-height:29px;color:#c2c2c2;transform:scaleX(0.9418);">C# Interactive (.NET Core)</div>
<div class="t s" style="left:1734.5px;top:1761.01px;font-size:24.5px;line-height:29px;color:#c2c2c2;transform:scaleX(0.9523);">Call Hierarchy</div>
<div class="t s" style="left:1905.4px;top:1761.01px;font-size:24.5px;line-height:29px;color:#c2c2c2;transform:scaleX(0.9571);">Developer PowerShell</div>
</nav>
<footer id="statusbar" class="grp">
<div style="left:0px;top:1808.5px;width:2620px;height:50px;background:#424242;"></div>
<div style="left:0px;top:1858.6px;width:2620px;height:3.4px;background:linear-gradient(90deg,#020202 0,#020202 1150px,#1a2412 1220px,#1c2613 2620px);"></div>
<div class="t s" style="left:55.7px;top:1819.41px;font-size:24.5px;line-height:29px;color:#f5f5f5;transform:scaleX(0.9949);">This item does not support previewing</div>
<div class="t s" style="left:1919.8px;top:1819.41px;font-size:24.5px;line-height:29px;color:#f5f5f5;transform:scaleX(0.9778);">Add to Source Control</div>
<div class="t s" style="left:2273.8px;top:1819.41px;font-size:24.5px;line-height:29px;color:#f5f5f5;transform:scaleX(0.9437);">Select Repository</div>
</footer>
<section id="icons" class="grp">
<svg style="left:0;top:0" width="2620" height="1862" viewBox="0 0 2620 1862"><g transform="translate(24,10)" ><path fill-rule="evenodd" fill="#6b6b6b" d="M27.5 0 L40 6 V34 L27.5 40 L12.5 25.8 L6 30.8 L0 27.5 V12.5 L6 9.2 L12.5 14.2 Z M27.5 13.5 V26.5 L19.5 20 Z M5.5 16.2 V23.8 L9.8 20 Z"/></g>
<circle cx="1432.5" cy="25.5" r="8.3" fill="none" stroke="#d0d0d0" stroke-width="2"/><line x1="1426.5" y1="31.5" x2="1418.8" y2="39.2" stroke="#d0d0d0" stroke-width="2.2"/>
<polygon points="1537.75,27 1549.25,27 1543.5,33" fill="#c8c8c8"/>
<g><clipPath id="av"><circle cx="2289.1" cy="30" r="20.2"/></clipPath><g clip-path="url(#av)"><rect x="2268" y="9" width="42" height="42" fill="#dadbdb"/><ellipse cx="2276" cy="30" rx="6" ry="4" fill="#c9caca"/><ellipse cx="2301" cy="24" rx="7" ry="9" fill="#e6e7e7"/><ellipse cx="2274" cy="22" rx="3" ry="2" fill="#8f8a88"/><path d="M2268 52 L2270.5 40.5 L2279.5 37.5 L2288.5 47 L2296 38 L2302 40.5 L2307 47 L2310 52 Z" fill="#1c2a4a"/><path d="M2280.3 26 Q2279.5 36 2283 41 L2283.5 44 L2288.5 47 L2294 43.5 L2294.5 40.5 Q2297.5 35 2297 26 Q2296 20 2288.5 20 Q2281 20 2280.3 26Z" fill="#c9a283"/><path d="M2279.6 29.5 Q2277.8 19 2283.5 16.5 Q2286 13.3 2289.5 15.6 Q2295.5 14.6 2297.6 21 Q2298.8 25.5 2297.2 29 Q2296.3 23 2292 21.8 Q2286 21 2282.2 23 Q2280.3 25.5 2279.6 29.5Z" fill="#1b1b1b"/><path d="M2280 29.2 H2297 V31 H2291 L2290.3 32 H2288 L2287.3 31 H2280 Z" fill="#141414"/><path d="M2281.5 31 V33 H2286.5 V31 M2291.5 31 V33 H2296 V31" stroke="#6a5040" stroke-width="1" fill="none"/><path d="M2287 37.6 H2291.5" stroke="#a0453f" stroke-width="1.2" fill="none"/></g></g>
<rect x="2383" y="30" width="20" height="2" fill="#e0e0e0"/>
<rect x="2477" y="23.5" width="17.5" height="17.5" fill="none" stroke="#e0e0e0" stroke-width="2"/>
<path d="M2568 23 L2586 41 M2586 23 L2568 41" stroke="#e0e0e0" stroke-width="2" fill="none"/>
<rect x="24" y="72" width="2" height="2" fill="#686868"/><rect x="32" y="72" width="2" height="2" fill="#686868"/><rect x="28" y="76" width="2" height="2" fill="#686868"/><rect x="24" y="80" width="2" height="2" fill="#686868"/><rect x="32" y="80" width="2" height="2" fill="#686868"/><rect x="28" y="84" width="2" height="2" fill="#686868"/><rect x="24" y="88" width="2" height="2" fill="#686868"/><rect x="32" y="88" width="2" height="2" fill="#686868"/><rect x="28" y="92" width="2" height="2" fill="#686868"/><rect x="24" y="96" width="2" height="2" fill="#686868"/><rect x="32" y="96" width="2" height="2" fill="#686868"/><rect x="28" y="100" width="2" height="2" fill="#686868"/><rect x="24" y="104" width="2" height="2" fill="#686868"/><rect x="32" y="104" width="2" height="2" fill="#686868"/>
<rect x="1384" y="72" width="2" height="2" fill="#686868"/><rect x="1392" y="72" width="2" height="2" fill="#686868"/><rect x="1388" y="76" width="2" height="2" fill="#686868"/><rect x="1384" y="80" width="2" height="2" fill="#686868"/><rect x="1392" y="80" width="2" height="2" fill="#686868"/><rect x="1388" y="84" width="2" height="2" fill="#686868"/><rect x="1384" y="88" width="2" height="2" fill="#686868"/><rect x="1392" y="88" width="2" height="2" fill="#686868"/><rect x="1388" y="92" width="2" height="2" fill="#686868"/><rect x="1384" y="96" width="2" height="2" fill="#686868"/><rect x="1392" y="96" width="2" height="2" fill="#686868"/><rect x="1388" y="100" width="2" height="2" fill="#686868"/><rect x="1384" y="104" width="2" height="2" fill="#686868"/><rect x="1392" y="104" width="2" height="2" fill="#686868"/>
<circle cx="62.2" cy="89.2" r="11.9" fill="#1e2a36" stroke="#4ca8ef" stroke-width="2"/><path d="M69 89.5 H55.5 M61 83.5 L55 89.5 L61 95.5" stroke="#4ca8ef" stroke-width="2" fill="none"/>
<polygon points="91,86.55 103,86.55 97,93.05" fill="#c8c8c8"/>
<circle cx="130" cy="89.2" r="11.9" fill="none" stroke="#444" stroke-width="2"/><path d="M123 89.5 H136.5 M131 83.5 L137 89.5 L131 95.5" stroke="#444" stroke-width="2" fill="none"/>
<g transform="translate(177,74)" ><g stroke="#f3cf86" stroke-width="1.8"><path d="M6.5 0 V13 M0 6.5 H13 M2 2 L11 11 M11 2 L2 11"/></g><circle cx="6.5" cy="6.5" r="2.6" fill="#1f1f1f"/><rect x="17" y="5" width="14" height="17.5" fill="#3a3a3a" stroke="#9a9a9a" stroke-width="2"/><rect x="5.5" y="13" width="14" height="14" fill="#2a2a2a" stroke="#bdbdbd" stroke-width="2"/><rect x="11" y="12.5" width="14.5" height="18.5" fill="#3a3a3a" fill-opacity="0.9" stroke="#f0f0f0" stroke-width="2.2"/></g>
<polygon points="221,86.55 233,86.55 227,93.05" fill="#c8c8c8"/>
<g transform="translate(246.5,74)" ><path d="M1 9 H9 L11.5 11.5 H21 V17" fill="#2a2a2a" stroke="#f3cf86" stroke-width="2"/><path d="M1 9 V27 H22.5 L27.5 16.5 H6 L1 27" fill="#8f7a54" stroke="#f3cf86" stroke-width="2" stroke-linejoin="round"/><path d="M18.5 10.5 Q18.5 4 25.5 4 M22.5 0.5 L26.5 4 L22.5 7.5" stroke="#4ca8ef" stroke-width="2.1" fill="none"/></g>
<g transform="translate(291,76)" ><path d="M1 1 H21.5 L27 6.5 V27 H1 Z" fill="#1e2a36" stroke="#4ca8ef" stroke-width="2"/><path d="M7 1 V9.5 H20 V1 M5.5 27 V17 H22 V27" fill="none" stroke="#4ca8ef" stroke-width="2"/></g>
<g transform="translate(335,76)" ><path d="M6 4.5 V1 H22.5 L27.5 5.5 V22 H24" fill="none" stroke="#4ca8ef" stroke-width="2"/><path d="M1 5.5 H18.5 L23 10 V27.5 H1 Z" fill="#1e2a36" stroke="#4ca8ef" stroke-width="2"/><path d="M6.5 5.5 V11.5 H17 V5.5 M5.5 27.5 V19 H18.5 V27.5" fill="none" stroke="#4ca8ef" stroke-width="2"/></g>
<g transform="translate(396.5,75.5)" ><path d="M1 1 V10 H10 M2 9.5 Q11 -1 20.5 5.5 Q27 12 20 19 L9.5 28" fill="none" stroke="#505050" stroke-width="2"/></g>
<polygon points="439,87.25 451,87.25 445,93.75" fill="#555"/>
<g transform="translate(467,75.5)" ><path d="M24 1 V10 H15 M23 9.5 Q14 -1 4.5 5.5 Q-2 12 5 19 L15.5 28" fill="none" stroke="#505050" stroke-width="2"/></g>
<polygon points="508.7,87.25 520.7,87.25 514.7,93.75" fill="#555"/>
<polygon points="658.8,87.25 670.8,87.25 664.8,93.75" fill="#c8c8c8"/>
<polygon points="890.4,87.25 902.4,87.25 896.4,93.75" fill="#c8c8c8"/>
<polygon points="930.6,76 951,89 930.6,102" fill="#6bd66b"/>
<polygon points="1031.3,86.75 1043.3,86.75 1037.3,93.25" fill="#c8c8c8"/>
<polygon points="1062,77.5 1080,89.3 1062,101.2" fill="#1f1f1f" stroke="#6bd66b" stroke-width="2" stroke-linejoin="round"/>
<path d="M1132.6 74.3 Q1124 75.5 1119.7 82.3 Q1118 85.2 1116 85.5 Q1113.5 84 1113.4 79.7 Q1106 85 1105.5 91 Q1105 100 1111 104 Q1117 107.5 1123 103.5 Q1128.5 99 1129 90 Q1129.5 86 1132.6 83.1 Q1128 84 1125.5 87.5 Q1125 80 1132.6 74.3 Z" fill="#2b2b2b" stroke="#363636" stroke-width="1.4" stroke-linejoin="round"/><circle cx="1116" cy="95.6" r="4.6" fill="#212121"/>
<polygon points="1145,86.75 1157,86.75 1151,93.25" fill="#555"/>
<path d="M1181.9 78.2 A13.3 13.3 0 1 0 1192.6 78.5" fill="none" stroke="#4ca8ef" stroke-width="2.3"/><path d="M1173.8 77.4 H1182.1 V85.2" fill="none" stroke="#4ca8ef" stroke-width="2.3"/>
<polygon points="1214.8,86.75 1226.8,86.75 1220.8,93.25" fill="#c8c8c8"/>
<g transform="translate(1256.5,78)" ><path d="M1.2 1.2 H10.5 L13 4 H26 V21.5 H1.2 Z" fill="#8f7a54" stroke="#f3cf86" stroke-width="2.2" stroke-linejoin="round"/><path d="M1.2 5 H12" stroke="#f3cf86" stroke-width="2"/><circle cx="24.5" cy="17" r="5.3" fill="#1f1f1f" stroke="#4ca8ef" stroke-width="2.2"/><line x1="20.5" y1="21" x2="13.5" y2="27" stroke="#4ca8ef" stroke-width="2.4"/></g>
<g transform="translate(1316,78)" ><path d="M4 22.5 H1.2 V1.2 H28 V22.5 H19" fill="#2d2d2d" stroke="#d0d0d0" stroke-width="2"/><path d="M1.2 6 H28" stroke="#d0d0d0" stroke-width="2"/><path d="M2 21 L9.5 14 L17 21 M4.5 19.5 V27.5 H14.5 V19.5 M8 27 V22.5 H11 V27" fill="#1f1f1f" stroke="#4ca8ef" stroke-width="2"/></g>
<rect x="1362" y="95.5" width="12" height="2" fill="#c8c8c8"/>
<polygon points="1362,101.2 1374,101.2 1368,107.4" fill="#c8c8c8"/>
<rect x="1852" y="95.5" width="12" height="2" fill="#c8c8c8"/>
<polygon points="1852,101.2 1864,101.2 1858,107.4" fill="#c8c8c8"/>
<text x="1406.5" y="90" font-family="Liberation Sans, sans-serif" font-weight="700" font-size="15.5" fill="#dcdcdc" textLength="27" lengthAdjust="spacingAndGlyphs">abc</text>
<path d="M1414.5 97.5 L1420 102.5 L1430 93.5" fill="none" stroke="#6bd66b" stroke-width="2.2"/>
<g transform="translate(1467,75)" ><path d="M0 0 L11.5 12 H6.5 L9.5 19 L7 20 L4 13.5 L0 17 Z" fill="#484848"/><path d="M5 21 V27.5 H29 V19.5 H12" fill="none" stroke="#484848" stroke-width="2"/><path d="M9 23.5 H25" stroke="#484848" stroke-width="2"/></g>
<g transform="translate(1511,76)" ><path d="M8 21 H1 V7 H8 M4.5 3 L8 7" fill="none" stroke="#484848" stroke-width="2"/><path d="M5 4 L8.5 0.5 L12 4" fill="none" stroke="#484848" stroke-width="2"/><path d="M15 0 V27" stroke="#484848" stroke-width="2"/><path d="M15 1 H28 M19 6 H24 M21 11 H28 M21 16 H28 M21 21 H28 M21 26 H28" stroke="#484848" stroke-width="2"/></g>
<g transform="translate(1573,79)" ><path d="M0 1 H5.5 M9 1 H24 M12 6.5 H24 M12 12 H24 M12 17.5 H24 M8 23 H24" stroke="#484848" stroke-width="2"/></g>
<g transform="translate(1612.5,75)" ><path d="M1 1 V7 H7 M2 6.5 Q8 0 13 5 Q16 10 7 18" fill="none" stroke="#484848" stroke-width="2"/><path d="M17 5 H30.5 M19 10.5 H30.5 M19 16 H30.5 M19 21.5 H30.5 M15 27 H30.5" stroke="#484848" stroke-width="2"/></g>
<path d="M1680 77 H1698 V102 L1689 93.5 L1680 102 Z" fill="#333" stroke="#ececec" stroke-width="2.2" stroke-linejoin="round"/>
<g transform="translate(1719,76)" ><path d="M7 8 V1 H25 V26 L16 17.5 L7 26 V14" fill="#2a2a2a" stroke="#484848" stroke-width="2"/><path d="M15 11 H1 M5.5 6.5 L1 11 L5.5 15.5" fill="none" stroke="#484848" stroke-width="2"/></g>
<g transform="translate(1761,76)" ><path d="M9.5 8 V1 H27.5 V26 L18.5 17.5 L9.5 26 V14" fill="#2a2a2a" stroke="#484848" stroke-width="2"/><path d="M0 11 H14.5 M10 6.5 L14.5 11 L10 15.5" fill="none" stroke="#484848" stroke-width="2"/></g>
<g transform="translate(1805.5,76)" ><path d="M9.5 9 V1 H27.5 V26 L18.5 17.5 L9.5 26 V13" fill="#2a2a2a" stroke="#484848" stroke-width="2"/><path d="M0.5 0.5 L9.5 9.5 M9.5 0.5 L0.5 9.5" fill="none" stroke="#484848" stroke-width="2"/></g>
<g transform="translate(2301.5,75.5)" ><path d="M4 17.5 Q1 16.5 1.5 12.5 L4 9 Q3 1.5 9.5 1.2 Q13.5 1 14.5 4 Q15.5 1 19.5 1.2 Q26 1.5 25 9 L27.5 12.5 Q28 16.5 25 17.5 V21 Q20 26 14.5 26 Q9 26 4 21 Z" fill="#3a3a3a" stroke="#d4d4d4" stroke-width="2.2"/><rect x="6.5" y="4" width="6.5" height="8" rx="2.5" fill="#1f1f1f" stroke="#d4d4d4" stroke-width="1.8"/><rect x="16" y="4" width="6.5" height="8" rx="2.5" fill="#1f1f1f" stroke="#d4d4d4" stroke-width="1.8"/><circle cx="22" cy="19.5" r="9.6" fill="#5fd068" stroke="#1f1f1f" stroke-width="1.6"/><path d="M17.5 19.8 L20.8 23 L26.8 16.6" fill="none" stroke="#1f1f1f" stroke-width="2.2"/></g>
<g transform="translate(2523,77.5)" ><path d="M7 9 H1.2 V25.5 H21 V19.5" fill="none" stroke="#d4d4d4" stroke-width="2"/><path d="M6 21 Q7 9.5 17.5 9.5 V3.5 L26.5 12 L17.5 20.5 V14.5 Q10 14.5 6 21Z" fill="#2d2d2d" stroke="#d4d4d4" stroke-width="2" stroke-linejoin="round"/></g>
<g transform="translate(2573,76)" ><path d="M9 7 V1.2 H27.5 V15 H22.5 L19 18.5" fill="#2d2d2d" stroke="#d4d4d4" stroke-width="2"/><circle cx="11.5" cy="13.5" r="5" fill="#2d2d2d" stroke="#d4d4d4" stroke-width="2"/><path d="M1.5 27.5 Q2 20 11.5 20 Q21 20 21.5 27.5" fill="#2d2d2d" stroke="#d4d4d4" stroke-width="2"/></g>
<g fill="#e0e0e0"><rect x="338" y="163" width="7" height="2.2"/><rect x="343.9" y="156.8" width="2.4" height="14.5"/><rect x="346" y="158.8" width="8.1" height="2"/><rect x="352.1" y="158.8" width="2" height="10.3"/><rect x="346" y="165.2" width="8.1" height="3.9"/></g>
<clipPath id="cx1"><rect x="373" y="155.8" width="22" height="16.4"/></clipPath><path clip-path="url(#cx1)" d="M372.4 153 L395.6 175 M395.6 153 L372.4 175" stroke="#e4e4e4" stroke-width="3.1" fill="none"/>
<polygon points="1975,161.95 1990,161.95 1982.5,169.45" fill="#c8c8c8"/>
<rect x="2015.8" y="151.8" width="4.4" height="20.4" fill="#d4d4d4" transform="rotate(0 2018 162)"/><rect x="2015.8" y="151.8" width="4.4" height="20.4" fill="#d4d4d4" transform="rotate(45 2018 162)"/><rect x="2015.8" y="151.8" width="4.4" height="20.4" fill="#d4d4d4" transform="rotate(90 2018 162)"/><rect x="2015.8" y="151.8" width="4.4" height="20.4" fill="#d4d4d4" transform="rotate(135 2018 162)"/><circle cx="2018" cy="162" r="7.3" fill="#d4d4d4"/><circle cx="2018" cy="162" r="3.4" fill="#1f1f1f"/>
<path d="M85 217.5 H100.5 V193.5 H75 V204.5" fill="none" stroke="#c8c8c8" stroke-width="2"/><path d="M75 197.5 H100.5" stroke="#c8c8c8" stroke-width="2"/><rect x="76" y="194.5" width="23.5" height="2.5" fill="#4a4646"/>
<circle cx="80.1" cy="212" r="9.8" fill="#1e2a36" stroke="#4ca8ef" stroke-width="2"/><ellipse cx="80.1" cy="212" rx="4.41" ry="9.8" fill="none" stroke="#4ca8ef" stroke-width="1.7"/><path d="M70.3 212 H89.9 M71.77 207.1 H88.43 M71.77 216.9 H88.43" stroke="#4ca8ef" stroke-width="1.5"/>
<polygon points="684.75,204.65 697.25,204.65 691,210.95" fill="#c8c8c8"/>
<path d="M728 201.9 H738 M732.2 201.9 V214.7 H738.5" fill="none" stroke="#f3cf86" stroke-width="2.1"/><g fill="#46403a" stroke="#f3cf86" stroke-width="2.1" stroke-linejoin="round"><rect x="-7" y="-4" width="14" height="8" transform="translate(724 199) rotate(-41)"/><rect x="-4.1" y="-2.5" width="8.2" height="5" transform="translate(741.7 204.2) rotate(-41)"/><rect x="-4.1" y="-2.5" width="8.2" height="5" transform="translate(741.6 216.5) rotate(-41)"/></g>
<polygon points="1329.45,204.65 1341.95,204.65 1335.7,210.95" fill="#c8c8c8"/>
<g transform="translate(1364,194)" ><path d="M12 1 L23 6 V19.5 L12 25 L1 19.5 V6 Z" fill="#2a2636" stroke="#8a6cd6" stroke-width="2" stroke-linejoin="round"/><path d="M1 6 L12 11.5 L23 6 M12 11.5 V25" fill="none" stroke="#8a6cd6" stroke-width="2"/></g>
<polygon points="1973.75,204.65 1986.25,204.65 1980,210.95" fill="#c8c8c8"/>
<g fill="#e4e4e4"><rect x="1999.8" y="204.2" width="22.3" height="3.1"/><rect x="1999.8" y="208.9" width="22.3" height="3"/><rect x="2009.9" y="196.5" width="2.4" height="8"/><rect x="2009.9" y="211.5" width="2.4" height="8"/></g><path d="M2007 200.5 L2011.1 195.5 L2015.2 200.5 M2007 215.8 L2011.1 220.8 L2015.2 215.8" fill="none" stroke="#e4e4e4" stroke-width="2.2"/><rect x="1999.8" y="207.3" width="22.3" height="1.6" fill="#111"/>
<polygon points="2002,252.25 2020,252.25 2011,242.75" fill="#9a9a9a"/>
<polygon points="2002,1688.75 2020,1688.75 2011,1698.25" fill="#9a9a9a"/>
<polygon points="165.85,1725.5 177.35,1725.5 171.6,1731.5" fill="#c8c8c8"/>
<g transform="translate(190,1716)" ><path d="M12 1.5 Q21.5 1.5 21.5 10 Q21.5 14 18 17 V21.5 H11.5" fill="none" stroke="#8a6cd6" stroke-width="2.2"/><path d="M12 4 V10 M16 6 L12.5 10 M18.5 10.5 H14" stroke="#8a6cd6" stroke-width="1.6"/><path d="M15 24 H18" stroke="#8a6cd6" stroke-width="2"/><path d="M1.5 9.5 Q0 14.5 4.5 16.5 L13 25 L16 22 L7.5 13.5 Q6.5 8.5 1.5 9.5 L5 13 L3.5 14.5Z" fill="#8a6cd6"/></g>
<circle cx="280.3" cy="1728" r="10.6" fill="#5fd068"/><path d="M274.8 1728.3 L278.8 1732.2 L286 1724.4" fill="none" stroke="#1f1f1f" stroke-width="2.3"/>
<g transform="translate(615,1713.5)" ><path d="M25 1.5 L14 15" stroke="#d4d4d4" stroke-width="2.6" fill="none"/><path d="M10 12.5 L17.5 18.5 L11.5 27 L1.5 19.5 Z" fill="#7a6a48" stroke="#f3cf86" stroke-width="1.8" stroke-linejoin="round"/><path d="M5 21.5 L7.5 18.5 M8 24 L11 20.5" stroke="#f3cf86" stroke-width="1.4"/><path d="M5.5 3 V9 M2.5 6 H8.5 M12.5 1 V5 M10.5 3 H14.5" stroke="#4ca8ef" stroke-width="1.7"/></g>
<polygon points="650.75,1724.45 663.25,1724.45 657,1731.95" fill="#f0f0f0"/>
<polygon points="734.5,1721.5 734.5,1737 724,1729.2" fill="#9a9a9a"/><polygon points="1626,1721.5 1626,1737 1636.5,1729.2" fill="#9a9a9a"/>
<path d="M9.5 1819 H39 V1840.5 H30 L24 1846.5 L18 1840.5 H9.5 Z" fill="none" stroke="#f0f0f0" stroke-width="2"/>
<path d="M1891.3 1844.5 V1820.5 M1881.5 1830.5 L1891.3 1820.5 L1901 1830.5" fill="none" stroke="#f0f0f0" stroke-width="2"/>
<polygon points="2170.55,1838.05 2186.05,1838.05 2178.3,1829.55" fill="#f5f5f5"/>
<polygon points="2469.55,1838.05 2485.05,1838.05 2477.3,1829.55" fill="#f5f5f5"/>
<g transform="translate(2232,1821)" ><path d="M1 1 H27.5 V6.5 H1 Z M3 6.5 V25 H25.5 V6.5" fill="none" stroke="#f0f0f0" stroke-width="2"/><path d="M10 6.5 V16.5 L14.2 13.5 L18.5 16.5 V6.5" fill="none" stroke="#f0f0f0" stroke-width="1.8"/></g>
<g transform="translate(2533.5,1818.5)" ><path d="M11.5 1.2 Q20 1.2 20 11 V17.5 L23 23.5 H0.5 L3 17.5 V11 Q3 1.2 11.5 1.2Z" fill="none" stroke="#f0f0f0" stroke-width="2"/><path d="M8 24 Q11.5 30 15 24" fill="none" stroke="#f0f0f0" stroke-width="2"/></g>
<rect x="2611.0" y="1830.5" width="2" height="2" fill="#9a9a9a"/><rect x="2608.2" y="1833.3" width="2" height="2" fill="#9a9a9a"/><rect x="2605.4" y="1836.1" width="2" height="2" fill="#9a9a9a"/><rect x="2611.0" y="1836.1" width="2" height="2" fill="#9a9a9a"/><rect x="2602.6" y="1838.9" width="2" height="2" fill="#9a9a9a"/><rect x="2608.2" y="1838.9" width="2" height="2" fill="#9a9a9a"/><rect x="2599.8" y="1841.7" width="2" height="2" fill="#9a9a9a"/><rect x="2605.4" y="1841.7" width="2" height="2" fill="#9a9a9a"/><rect x="2611.0" y="1841.7" width="2" height="2" fill="#9a9a9a"/><rect x="2597.0" y="1844.5" width="2" height="2" fill="#9a9a9a"/><rect x="2602.6" y="1844.5" width="2" height="2" fill="#9a9a9a"/><rect x="2608.2" y="1844.5" width="2" height="2" fill="#9a9a9a"/>
<polygon points="2459,159.9 2475,159.9 2467,168.1" fill="#dcdcdc"/>
<g fill="#e2e2e2"><rect x="2496" y="152.9" width="2" height="12.7"/><rect x="2496" y="152.9" width="10" height="2"/><rect x="2501.7" y="152.9" width="4.3" height="12.7"/><rect x="2494" y="165" width="14" height="2.2"/><rect x="2499.8" y="167.2" width="2.2" height="7.9"/></g>
<clipPath id="cx2"><rect x="2524" y="155.9" width="22" height="16.2"/></clipPath><path clip-path="url(#cx2)" d="M2523.4 153 L2546.6 175 M2546.6 153 L2523.4 175" stroke="#e4e4e4" stroke-width="3.1" fill="none"/>
<rect x="2073" y="200" width="16.5" height="20" fill="#2d2d2d" stroke="#d4d4d4" stroke-width="1.8"/><path d="M2077 205 H2079 M2081 205 H2086.5 M2077 209.5 H2079 M2081 209.5 H2086.5 M2077 214 H2079 M2081 214 H2086.5" stroke="#d4d4d4" stroke-width="1.8"/>
<rect x="2059" y="211" width="19" height="19" fill="#1f1f1f"/>
<g transform="translate(2059.5,212) scale(0.450)"><path fill-rule="evenodd" fill="#8a6cd6" d="M27.5 0 L40 6 V34 L27.5 40 L12.5 25.8 L6 30.8 L0 27.5 V12.5 L6 9.2 L12.5 14.2 Z M27.5 13.5 V26.5 L19.5 20 Z M5.5 16.2 V23.8 L9.8 20 Z"/></g>
<polygon points="2121.5,198 2132,198 2128,203 2128,208 2125.5,208 2125.5,203" fill="#4ca8ef"/>
<circle cx="2138.5" cy="216" r="10.3" fill="none" stroke="#d4d4d4" stroke-width="2"/><path d="M2138.5 209 V216.5 H2144.5" fill="none" stroke="#d4d4d4" stroke-width="2"/>
<polygon points="2166,211.25 2178,211.25 2172,217.75" fill="#c8c8c8"/>
<path d="M2219 209.5 H2194.5 L2201.5 202.5 M2193.5 216.5 H2218 L2211 223.5" fill="none" stroke="#d4d4d4" stroke-width="2"/>
<path d="M2240 213.5 L2250 204 L2260 213.5 M2240 222.5 L2250 213 L2260 222.5" fill="none" stroke="#d4d4d4" stroke-width="2.2"/>
<rect x="2288.5" y="201" width="18" height="19.5" rx="1" fill="#3a3a3a" stroke="#b0aca4" stroke-width="1.8"/><rect x="2281" y="205.5" width="14" height="19" rx="1" fill="none" stroke="#c8c8c8" stroke-width="1.8"/><rect x="2287" y="209.5" width="13.5" height="17.5" rx="1" fill="#4a4444" fill-opacity="0.85" stroke="#e8e8e8" stroke-width="2"/>
<g fill="none" stroke="#e8e8e8" stroke-width="1.8"><rect x="2342.5" y="201" width="5" height="5"/><rect x="2351" y="209.5" width="6" height="6"/><rect x="2361.5" y="220" width="7.5" height="7.5"/><path d="M2345 206 V212.5 H2351 M2354 215.5 V223.5 H2361.5"/></g>
<polygon points="2384,211.25 2396,211.25 2390,217.75" fill="#c8c8c8"/>
<path d="M2428 225.5 L2440.5 212.5" stroke="#d4d4d4" stroke-width="5" stroke-linecap="round"/><path d="M2428.5 225 L2440 213" stroke="#2a2a2a" stroke-width="1.6" stroke-linecap="round"/><path d="M2447 199.5 Q2439.5 199 2438.5 206.5 Q2438.5 213.5 2445.5 214.5 Q2452.5 214 2453 207 L2448.5 210.5 L2443.5 208.5 L2443 204 Z" fill="#d4d4d4"/>
<path d="M2468 220.5 H2491 M2472.5 220.5 V214.5 H2488.5 V220.5" fill="none" stroke="#e8e8e8" stroke-width="1.8"/><path d="M2490 204 V208 M2494.5 209.5 L2497.5 206.5 M2495.5 214 H2499.5" stroke="#f3cf86" stroke-width="1.8"/>
<circle cx="2516.5" cy="262" r="7.2" fill="none" stroke="#d0d0d0" stroke-width="3"/><line x1="2511" y1="268" x2="2501" y2="278" stroke="#d0d0d0" stroke-width="4"/>
<polygon points="2536.25,261 2547.75,261 2542,267" fill="#c8c8c8"/>
<path d="M2085 320.7 H2077.6 V297 H2103 V308.5" fill="none" stroke="#b8b8b8" stroke-width="2"/><path d="M2077.6 302 H2103" stroke="#b8b8b8" stroke-width="2"/><rect x="2078.6" y="298" width="23.4" height="3" fill="#4a4646"/>
<g transform="translate(2086,306.6) scale(0.445)"><path fill-rule="evenodd" fill="#8a6cd6" d="M27.5 0 L40 6 V34 L27.5 40 L12.5 25.8 L6 30.8 L0 27.5 V12.5 L6 9.2 L12.5 14.2 Z M27.5 13.5 V26.5 L19.5 20 Z M5.5 16.2 V23.8 L9.8 20 Z"/></g>
<polygon points="2080,341.1 2080,354.1 2067,354.1" fill="#c8c8c8"/>
<path d="M2125.5 359.2 H2141 V335.2 H2115.5 V346.2" fill="none" stroke="#c8c8c8" stroke-width="2"/><path d="M2115.5 339.2 H2141" stroke="#c8c8c8" stroke-width="2"/><rect x="2116.5" y="336.2" width="23.5" height="2.5" fill="#4a4646"/>
<circle cx="2120.6" cy="353.7" r="9.8" fill="#1e2a36" stroke="#4ca8ef" stroke-width="2"/><ellipse cx="2120.6" cy="353.7" rx="4.41" ry="9.8" fill="none" stroke="#4ca8ef" stroke-width="1.7"/><path d="M2110.8 353.7 H2130.4 M2112.27 348.8 H2128.93 M2112.27 358.6 H2128.93" stroke="#4ca8ef" stroke-width="1.5"/>
<path d="M2104.5 376.1 L2113.1 385.1 L2104.5 394.1 Z" fill="none" stroke="#c4c4c4" stroke-width="1.9" stroke-linejoin="miter"/>
<path d="M2104.5 414.1 L2113.1 423.1 L2104.5 432.1 Z" fill="none" stroke="#c4c4c4" stroke-width="1.9" stroke-linejoin="miter"/>
<path d="M2104.5 452.1 L2113.1 461.1 L2104.5 470.1 Z" fill="none" stroke="#c4c4c4" stroke-width="1.9" stroke-linejoin="miter"/>
<path d="M2104.5 756.1 L2113.1 765.1 L2104.5 774.1 Z" fill="none" stroke="#c4c4c4" stroke-width="1.9" stroke-linejoin="miter"/>
<path d="M2104.5 832.1 L2113.1 841.1 L2104.5 850.1 Z" fill="none" stroke="#c4c4c4" stroke-width="1.9" stroke-linejoin="miter"/>
<polygon points="2116.5,493 2116.5,506 2103.5,506" fill="#c8c8c8"/>
<polygon points="2116.5,569 2116.5,582 2103.5,582" fill="#c8c8c8"/>
<path d="M2140.5 528.1 L2149.1 537.1 L2140.5 546.1 Z" fill="none" stroke="#c4c4c4" stroke-width="1.9" stroke-linejoin="miter"/>
<path d="M2140.5 604.1 L2149.1 613.1 L2140.5 622.1 Z" fill="none" stroke="#c4c4c4" stroke-width="1.9" stroke-linejoin="miter"/>
<path d="M2140.5 642.1 L2149.1 651.1 L2140.5 660.1 Z" fill="none" stroke="#c4c4c4" stroke-width="1.9" stroke-linejoin="miter"/>
<path d="M2140.5 680.1 L2149.1 689.1 L2140.5 698.1 Z" fill="none" stroke="#c4c4c4" stroke-width="1.9" stroke-linejoin="miter"/>
<path d="M2140.5 718.1 L2149.1 727.1 L2140.5 736.1 Z" fill="none" stroke="#c4c4c4" stroke-width="1.9" stroke-linejoin="miter"/>
<path d="M2152 393 Q2146.5 391.5 2147.5 386 Q2148.5 381 2153.5 381.5 Q2156 374.5 2163 376 Q2168.5 377 2169.5 382.5 Q2176.5 383 2176 388.5 Q2175.5 393 2170.5 393" fill="#1e2a36" stroke="#4ca8ef" stroke-width="1.9"/><path d="M2158.5 382.5 V386.5 M2164 382.5 V386.5 M2156.5 387 H2166 V391.5 Q2161.2 396 2156.5 391.5 Z M2161.2 394.5 V399.5" fill="none" stroke="#4ca8ef" stroke-width="1.9"/>
<g fill="#2d2d2d" stroke="#d0d0d0" stroke-width="1.8"><rect x="2163" y="412.5" width="13" height="9"/><rect x="2151" y="415.5" width="9" height="7.5"/><rect x="2147" y="425" width="6" height="6"/><rect x="2164" y="422.5" width="10" height="9.5"/></g><path d="M2153 428 H2164 M2160 419 H2163" stroke="#d0d0d0" stroke-width="1.8"/>
<path d="M2150 450.5 H2160.2 L2163 453.5 H2176 V469 H2150 Z" fill="#8f7a54" stroke="#f3cf86" stroke-width="2" stroke-linejoin="round"/><path d="M2150 454.5 H2161.6" stroke="#f3cf86" stroke-width="1.6"/>
<path d="M2162 475.5 L2153 467" stroke="#1e1e1e" stroke-width="6.5" stroke-linecap="round"/><circle cx="2151" cy="464.8" r="6.2" fill="#1e1e1e"/><path d="M2162 475.5 L2153 467" stroke="#dcdcdc" stroke-width="3.8" stroke-linecap="round"/><path d="M2152.5 459.5 Q2146.5 459 2146 465 Q2146.5 470 2152 470 Q2156.5 469 2156.5 463.5 L2152.8 466.7 L2149.3 463.7 Z" fill="#dcdcdc"/>
<path d="M2148.6 489.5 H2158.96 L2161.8 492.5 H2175 V509 H2148.6 Z" fill="#8f7a54" stroke="#f3cf86" stroke-width="2" stroke-linejoin="round"/><path d="M2148.6 493.5 H2160.38" stroke="#f3cf86" stroke-width="1.6"/>
<path d="M2148.6 565.5 H2158.96 L2161.8 568.5 H2175 V585 H2148.6 Z" fill="#8f7a54" stroke="#f3cf86" stroke-width="2" stroke-linejoin="round"/><path d="M2148.6 569.5 H2160.38" stroke="#f3cf86" stroke-width="1.6"/>
<text x="2184" y="546" font-family="Liberation Sans, sans-serif" font-weight="400" font-size="22.5" fill="#6bd66b" stroke="#6bd66b" stroke-width="0.7" textLength="12" lengthAdjust="spacingAndGlyphs">C</text><text x="2199.5" y="542.1" font-family="Liberation Sans, sans-serif" font-weight="400" font-size="17.5" fill="#6bd66b" stroke="#6bd66b" stroke-width="0.7" textLength="12.3" lengthAdjust="spacingAndGlyphs">#</text>
<text x="2184" y="622" font-family="Liberation Sans, sans-serif" font-weight="400" font-size="22.5" fill="#6bd66b" stroke="#6bd66b" stroke-width="0.7" textLength="12" lengthAdjust="spacingAndGlyphs">C</text><text x="2199.5" y="618.1" font-family="Liberation Sans, sans-serif" font-weight="400" font-size="17.5" fill="#6bd66b" stroke="#6bd66b" stroke-width="0.7" textLength="12.3" lengthAdjust="spacingAndGlyphs">#</text>
<text x="2184" y="660" font-family="Liberation Sans, sans-serif" font-weight="400" font-size="22.5" fill="#6bd66b" stroke="#6bd66b" stroke-width="0.7" textLength="12" lengthAdjust="spacingAndGlyphs">C</text><text x="2199.5" y="656.1" font-family="Liberation Sans, sans-serif" font-weight="400" font-size="17.5" fill="#6bd66b" stroke="#6bd66b" stroke-width="0.7" textLength="12.3" lengthAdjust="spacingAndGlyphs">#</text>
<text x="2184" y="698" font-family="Liberation Sans, sans-serif" font-weight="400" font-size="22.5" fill="#6bd66b" stroke="#6bd66b" stroke-width="0.7" textLength="12" lengthAdjust="spacingAndGlyphs">C</text><text x="2199.5" y="694.1" font-family="Liberation Sans, sans-serif" font-weight="400" font-size="17.5" fill="#6bd66b" stroke="#6bd66b" stroke-width="0.7" textLength="12.3" lengthAdjust="spacingAndGlyphs">#</text>
<text x="2184" y="736" font-family="Liberation Sans, sans-serif" font-weight="400" font-size="22.5" fill="#6bd66b" stroke="#6bd66b" stroke-width="0.7" textLength="12" lengthAdjust="spacingAndGlyphs">C</text><text x="2199.5" y="732.1" font-family="Liberation Sans, sans-serif" font-weight="400" font-size="17.5" fill="#6bd66b" stroke="#6bd66b" stroke-width="0.7" textLength="12.3" lengthAdjust="spacingAndGlyphs">#</text>
<text x="2147.5" y="850" font-family="Liberation Sans, sans-serif" font-weight="400" font-size="22.5" fill="#6bd66b" stroke="#6bd66b" stroke-width="0.7" textLength="12" lengthAdjust="spacingAndGlyphs">C</text><text x="2163" y="846.1" font-family="Liberation Sans, sans-serif" font-weight="400" font-size="17.5" fill="#6bd66b" stroke="#6bd66b" stroke-width="0.7" textLength="12.3" lengthAdjust="spacingAndGlyphs">#</text>
<path d="M2151 753 H2167 L2173.5 759.5 V780 H2151 Z" fill="#2d2d2d" stroke="#b8b8b8" stroke-width="2" stroke-linejoin="round"/><text x="2153.2" y="774" font-family="Liberation Mono, monospace" font-weight="700" font-size="15" fill="#e8e8e8" textLength="18" lengthAdjust="spacingAndGlyphs">{}</text>
<path d="M2159 801.5 V791.5 Q2159 788.5 2162 788.5 H2177 V794.5 H2172 V809.5 H2167" fill="#2d2d2d" stroke="#d0d0d0" stroke-width="2"/>
<circle cx="2156" cy="808.5" r="9" fill="#1e2a36" stroke="#4ca8ef" stroke-width="2"/><ellipse cx="2156" cy="808.5" rx="4.05" ry="9" fill="none" stroke="#4ca8ef" stroke-width="1.7"/><path d="M2147 808.5 H2165 M2148.35 804 H2163.65 M2148.35 813 H2163.65" stroke="#4ca8ef" stroke-width="1.5"/>
<polygon points="2068.7,1679.5 2068.7,1697 2058,1688.2" fill="#9a9a9a"/><polygon points="2536.8,1679.5 2536.8,1697 2547.5,1688.2" fill="#9a9a9a"/></svg>
</section>
</body></html>
